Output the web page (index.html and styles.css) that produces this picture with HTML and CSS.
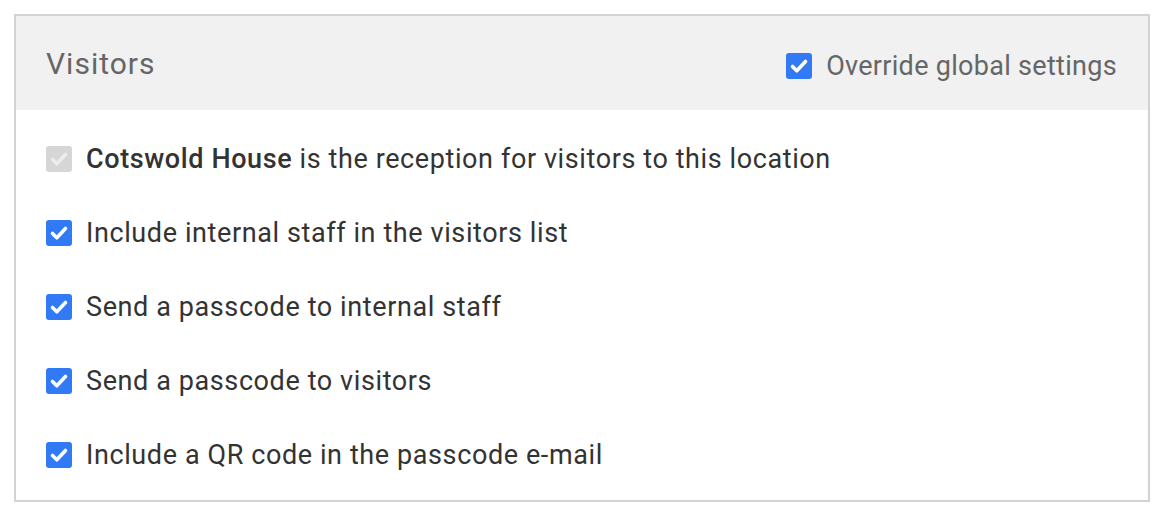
FILE: index.html
```html
<!doctype html>
<html>
<head>
<meta charset="utf-8">
<title>Visitors</title>
<link rel="stylesheet" href="styles.css">
</head>
<body>
<div class="panel">
	<div class="panel-head">
		<h2>Visitors</h2>
		<label class="opt head-opt">
			<span class="box on"><svg viewBox="0 0 26 26"><path d="M6.5 13.5l4.3 4.3 8.7-9.3"/></svg></span>
			Override global settings
		</label>
	</div>
	<div class="panel-body">
		<label class="opt">
			<span class="box off"><svg viewBox="0 0 26 26"><path d="M6.5 13.5l4.3 4.3 8.7-9.3"/></svg></span>
			<span><b>Cotswold House</b> is the reception for visitors to this location</span>
		</label>
		<label class="opt">
			<span class="box on"><svg viewBox="0 0 26 26"><path d="M6.5 13.5l4.3 4.3 8.7-9.3"/></svg></span>
			Include internal staff in the visitors list
		</label>
		<label class="opt">
			<span class="box on"><svg viewBox="0 0 26 26"><path d="M6.5 13.5l4.3 4.3 8.7-9.3"/></svg></span>
			Send a passcode to internal staff
		</label>
		<label class="opt">
			<span class="box on"><svg viewBox="0 0 26 26"><path d="M6.5 13.5l4.3 4.3 8.7-9.3"/></svg></span>
			Send a passcode to visitors
		</label>
		<label class="opt">
			<span class="box on"><svg viewBox="0 0 26 26"><path d="M6.5 13.5l4.3 4.3 8.7-9.3"/></svg></span>
			Include a QR code in the passcode e-mail
		</label>
	</div>
</div>
</body>
</html>
```

FILE: styles.css
```css
body{
	margin:0;
	background-color:#fff;
	font-family:Roboto, "Liberation Sans", Arial, sans-serif;
	color:#333;
	}
.panel{
	margin:14px 0 0 14px;
	width:1132px;
	border:2px solid #d2d2d2;
	}
.panel-head{
	height:94px;
	background-color:#f1f1f1;
	display:flex;
	align-items:center;
	justify-content:space-between;
	padding:0 31px 0 30px;
	}
.panel-head h2{
	margin:0;
	font-size:30px;
	letter-spacing:1px;
	font-weight:400;
	color:#666;
	}
.panel-body{
	padding:12px 30px 8px 30px;
	}
.opt{
	display:flex;
	align-items:center;
	gap:14px;
	height:74px;
	font-size:27px;
	letter-spacing:0.6px;
	}
.head-opt{
	height:auto;
	margin-top:6px;
	color:#666;
	letter-spacing:0.3px;
	}
.opt b{
	font-weight:500;
	}
.box{
	width:26px;
	height:26px;
	border-radius:3px;
	flex:none;
	display:flex;
	}
.box svg{
	width:26px;
	height:26px;
	fill:none;
	stroke-width:3.6;
	stroke-linecap:round;
	stroke-linejoin:round;
	}
.box.on{
	background-color:#3279f5;
	}
.box.on svg{
	stroke:#fff;
	}
.box.off{
	background-color:#d6d6d6;
	}
.box.off svg{
	stroke:#ececec;
	}
```
